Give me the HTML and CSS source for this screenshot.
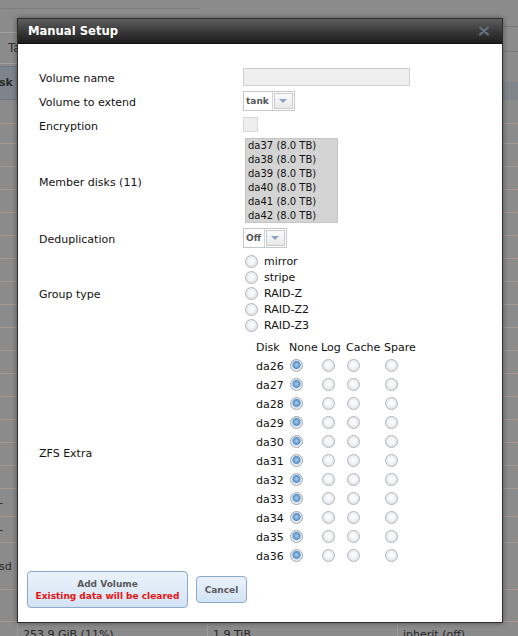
FILE: index.html
```html
<!DOCTYPE html>
<html>
<head>
  <meta charset="UTF-8">
  <title>Manual Setup</title>
  <link rel="stylesheet" href="styles.css">
</head>
<body>
  <!-- Dimmed page behind the dialog -->
  <div class="page">
    <div class="page-head">
      <div class="head-left">
        <div class="hl-strip"></div>
        <div class="hl-bar"></div>
        <div class="hl-tabs"><span class="tab">Ta</span></div>
        <div class="hl-btn">sk</div>
      </div>
      <div class="head-right">
        <div class="hr-bar"></div>
        <div class="hr-bar2"></div>
        <div class="hr-band"></div>
      </div>
    </div>
    <div class="rows">
      <div class="row"><div class="cell"></div></div>
      <div class="row short"><div class="cell"></div></div>
      <div class="row"><div class="cell"></div></div>
      <div class="row"><div class="cell"></div></div>
      <div class="row"><div class="cell"></div></div>
      <div class="row"><div class="cell"></div></div>
      <div class="row"><div class="cell"></div></div>
      <div class="row"><div class="cell"></div></div>
      <div class="row"><div class="cell"></div></div>
      <div class="row"><div class="cell"></div></div>
      <div class="row"><div class="cell"></div></div>
      <div class="row"><div class="cell"></div></div>
      <div class="row"><div class="cell"></div></div>
      <div class="row"><div class="cell"></div></div>
      <div class="row"><div class="cell"></div></div>
      <div class="row"><div class="cell"></div></div>
      <div class="row"><div class="cell"></div></div>
      <div class="row r28"><div class="cell cut">-</div></div>
      <div class="row r26"><div class="cell cut">-</div></div>
      <div class="row r47"><div class="cell cut">sd</div></div>
      <div class="row r32"><div class="cell"></div></div>
      <div class="row data">
        <div class="cell"></div>
        <div class="cell">253.9 GiB (11%)</div>
        <div class="cell">1.9 TiB</div>
        <div class="cell">inherit (off)</div>
      </div>
    </div>
  </div>

  <!-- Manual Setup dialog -->
  <div class="dialog">
    <div class="dialog-title">
      <span>Manual Setup</span>
      <svg class="close" width="12" height="10" viewBox="0 0 12 10">
        <path d="M2 1.5 L10 8.5 M10 1.5 L2 8.5" stroke="#56626d" stroke-width="2.6" stroke-linecap="round"/>
        <path d="M2.3 1.8 L9.7 8.2 M9.7 1.8 L2.3 8.2" stroke="#7a8792" stroke-width="0.8"/>
      </svg>
    </div>
    <div class="dialog-body">
      <div class="form">
        <div class="lbl">Volume name</div>
        <div class="ctl"><input class="text-input" type="text"></div>

        <div class="lbl">Volume to extend</div>
        <div class="ctl">
          <div class="select"><span class="sel-text">tank</span><span class="sel-btn"><span class="arrow"></span></span></div>
        </div>

        <div class="lbl">Encryption</div>
        <div class="ctl check-row"><span class="checkbox"></span></div>

        <div class="lbl">Member disks (11)</div>
        <div class="ctl">
          <div class="listbox">
            <div>da37 (8.0 TB)</div>
            <div>da38 (8.0 TB)</div>
            <div>da39 (8.0 TB)</div>
            <div>da40 (8.0 TB)</div>
            <div>da41 (8.0 TB)</div>
            <div>da42 (8.0 TB)</div>
          </div>
        </div>

        <div class="lbl">Deduplication</div>
        <div class="ctl">
          <div class="select"><span class="sel-text">Off</span><span class="sel-btn"><span class="arrow"></span></span></div>
        </div>

        <div class="lbl">Group type</div>
        <div class="ctl">
          <label class="radio-line"><input type="radio" name="gt"> mirror</label>
          <label class="radio-line"><input type="radio" name="gt"> stripe</label>
          <label class="radio-line"><input type="radio" name="gt"> RAID-Z</label>
          <label class="radio-line"><input type="radio" name="gt"> RAID-Z2</label>
          <label class="radio-line"><input type="radio" name="gt"> RAID-Z3</label>
        </div>

        <div class="lbl">ZFS Extra</div>
        <div class="ctl">
          <div class="extra">
            <div class="eh">Disk</div><div class="eh">None</div><div class="eh">Log</div><div class="eh">Cache</div><div class="eh">Spare</div>
          </div>
          <div id="extraRows"></div>
        </div>
      </div>

      <div class="actions">
        <button class="btn add">Add Volume<br><span class="warn">Existing data will be cleared</span></button>
        <button class="btn cancel">Cancel</button>
      </div>
    </div>
  </div>

  <script>
    // build the disk rows for ZFS Extra
    var box = document.getElementById('extraRows');
    for (var i = 26; i <= 36; i++) {
      var row = document.createElement('div');
      row.className = 'extra row-e';
      var html = '<div>da' + i + '</div>';
      ['none', 'log', 'cache', 'spare'].forEach(function(k) {
        html += '<div><input type="radio" name="d' + i + '"' + (k == 'none' ? ' checked' : '') + '></div>';
      });
      row.innerHTML = html;
      box.appendChild(row);
    }
  </script>
</body>
</html>
```

FILE: styles.css
```css
/* page behind the dialog */
body {
  margin: 0;
  background: #8b8b8b;
  font-family: "DejaVu Sans", Verdana, sans-serif;
  font-size: 11px;
  overflow: hidden;
}
.page {
  width: 518px;
  height: 636px;
  overflow: hidden;
  color: #262626;
}
.page-head {
  height: 101px;
  display: flex;
  justify-content: space-between;
}
.head-left, .head-right {
  width: 200px;
}
.hl-strip {
  height: 8px;
  border-bottom: 1px solid #7d7d7d;
}
.hl-bar {
  height: 23px;
  border-bottom: 1px solid #a2a2a2;
}
.hl-tabs {
  height: 30px;
  border-bottom: 1px solid #a2a2a2;
  display: flex;
  align-items: center;
}
.tab {
  margin-left: 8px;
  font-size: 12px;
  color: #333;
}
.hl-btn {
  margin-top: 2px;
  height: 32px;
  margin-left: -2px;
  background: #7e848b;
  border: 1px solid #6e7680;
  font-weight: bold;
  font-size: 11px;
  line-height: 32px;
  color: #2a2a2a;
}
.hr-bar {
  height: 26px;
  border-bottom: 1px solid #777;
}
.hr-bar2 {
  height: 24px;
  border-bottom: 1px solid #777;
}
.hr-band {
  margin-top: 30px;
  height: 18px;
  background: #80868c;
}
.row {
  height: 22px;
  border-bottom: 1px solid #a6988e;
  display: grid;
  grid-template-columns: 17px 190px 190px 1fr;
  align-items: center;
}
.row.short { height: 19px; }
.row.r28 { height: 27px; }
.row.r26 { height: 25px; }
.row.r47 { height: 46px; }
.row.r32 { height: 31px; }
.cell {
  white-space: nowrap;
  overflow: hidden;
}
.cut {
  text-indent: -1px;
}
.row.data {
  height: 30px;
  align-items: stretch;
}
.row.data .cell {
  border-left: 1px solid #9a9a9a;
  padding: 6px 0 0 5px;
}
.row.data .cell:first-child {
  border-left: 0;
}

/* dialog */
.dialog {
  position: absolute;
  left: 17px;
  top: 18px;
  width: 486px;
  box-sizing: border-box;
  background: white;
  border: 1px solid #2f2f2f;
  box-shadow: 0 0 5px rgba(0, 0, 0, 0.45);
}
.dialog-title {
  height: 25px;
  background: linear-gradient(#5e5e5e, #343434 60%, #1e1e1e);
  border-bottom: 1px solid #111;
  box-sizing: border-box;
  display: flex;
  align-items: center;
  justify-content: space-between;
  padding: 0 12px 0 10px;
  color: white;
  font-weight: bold;
  font-size: 11.6px;
}
.close {
  display: block;
}
.dialog-body {
  padding: 24px 0 14px 0;
  color: #111;
}
.form {
  display: grid;
  grid-template-columns: 204px 1fr;
  row-gap: 5px;
  align-items: center;
  padding-left: 21px;
}
.lbl {
  padding-top: 3px;
}
.text-input {
  display: block;
  width: 167px;
  height: 18px;
  box-sizing: border-box;
  margin: 0;
  background: #efefef;
  border: 1px solid #cfcfcf;
}
.select {
  display: inline-flex;
  vertical-align: top;
  height: 20px;
  box-sizing: border-box;
  border: 1px solid #c3c8cf;
  background: white;
}
.sel-text {
  padding: 0 3px 0 2px;
  font-size: 9px;
  font-weight: bold;
  color: #555;
  line-height: 18px;
  border-right: 1px solid #d0d3d8;
}
.sel-btn {
  width: 19px;
  height: 16px;
  margin: 1px;
  border: 1px solid #cacaca;
  box-sizing: border-box;
  background: linear-gradient(#fbfbfb, #e9e9e9);
  display: flex;
  align-items: center;
  justify-content: center;
}
.arrow {
  width: 0;
  height: 0;
  border-left: 4px solid transparent;
  border-right: 4px solid transparent;
  border-top: 4px solid #8da4c6;
}
.check-row {
  height: 17px;
  display: flex;
  align-items: center;
}
.checkbox {
  width: 15px;
  height: 15px;
  box-sizing: border-box;
  background: #eeeeee;
  border: 1px solid #d6d6d6;
}
.listbox {
  margin-left: 2px;
  width: 93px;
  height: 85px;
  box-sizing: border-box;
  background: #d4d4d4;
  border: 1px solid #c4c4c4;
  padding-left: 2px;
  font-size: 10px;
  line-height: 14px;
  color: #111;
}
.radio-line {
  display: flex;
  align-items: center;
  height: 16px;
}
input[type=radio] {
  appearance: none;
  -webkit-appearance: none;
  width: 13px;
  height: 13px;
  margin: 0;
  border: 1px solid #b5b5b5;
  border-radius: 50%;
  background: radial-gradient(circle at 50% 45%, #ffffff 0, #f3f5f8 3px, #dfe4ea 6px);
  box-sizing: border-box;
}
input[type=radio]:checked {
  border-color: #a6a6a6;
  background: radial-gradient(circle at 50% 45%, #a9cdef 0, #6fa3d4 2.5px, #5b8fc2 3.5px, #d7e6f4 4.5px, #eef3f8 6px);
}
.radio-line input {
  margin-left: 2px;
  margin-right: 6px;
}
.extra {
  display: grid;
  grid-template-columns: 33px 32px 25px 38px 40px;
  padding-left: 13px;
  align-items: center;
}
.eh {
  height: 18px;
  line-height: 20px;
}
.row-e {
  height: 19px;
}
.row-e div:first-child {
  padding-top: 2px;
}
.row-e input {
  display: block;
  margin-left: 1px;
}
.actions {
  display: flex;
  align-items: center;
  gap: 8px;
  padding-left: 9px;
  margin-top: 6px;
}
.btn {
  font-family: "DejaVu Sans", Verdana, sans-serif;
  font-weight: bold;
  font-size: 9px;
  line-height: 12px;
  border: 1px solid #8ca9cb;
  border-radius: 4px;
  background: linear-gradient(#eaf2fb, #d3e3f4);
  color: #5a5a5a;
  margin: 0;
  padding: 0;
  cursor: pointer;
}
.btn.add {
  width: 161px;
  height: 37px;
}
.btn.cancel {
  width: 51px;
  height: 27px;
}
.warn {
  color: #ec1010;
}
```
